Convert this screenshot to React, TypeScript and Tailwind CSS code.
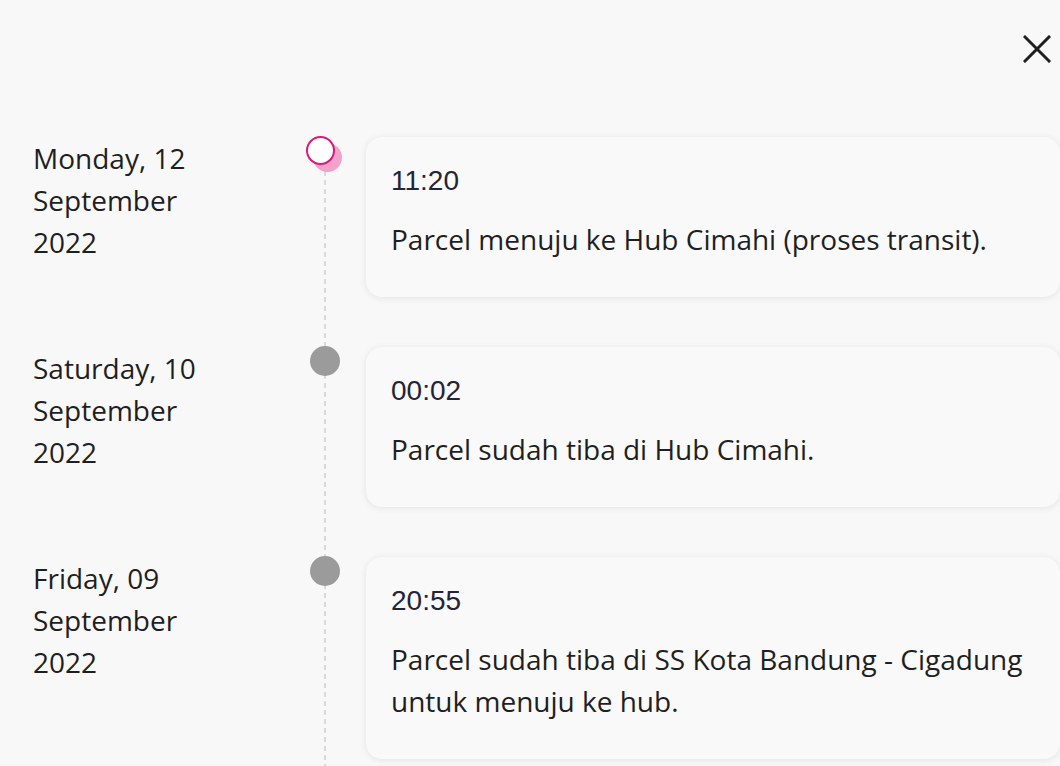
type TrackingEvent = {
  day: string;
  month: string;
  year: string;
  time: string;
  note: string;
};

const EVENTS: TrackingEvent[] = [
  {
    day: "Monday, 12",
    month: "September",
    year: "2022",
    time: "11:20",
    note: "Parcel menuju ke Hub Cimahi (proses transit).",
  },
  {
    day: "Saturday, 10",
    month: "September",
    year: "2022",
    time: "00:02",
    note: "Parcel sudah tiba di Hub Cimahi.",
  },
  {
    day: "Friday, 09",
    month: "September",
    year: "2022",
    time: "20:55",
    note: "Parcel sudah tiba di SS Kota Bandung - Cigadung untuk menuju ke hub.",
  },
];

function CloseIcon() {
  return (
    <svg width="28" height="28" viewBox="0 0 28 28" fill="none" stroke="currentColor" strokeWidth="3" strokeLinecap="square">
      <path d="M2 2L26 26M26 2L2 26" />
    </svg>
  );
}

// latest event gets the hollow pink marker, older ones a plain grey dot
function Marker({ latest }: { latest: boolean }) {
  if (latest) {
    return (
      <span className="relative z-10 mt-[-1px] ml-[-9px] block h-[29px] w-[29px] rounded-full border-2 border-[#d81b78] bg-white shadow-[7px_7px_0_#f3a3c9]" />
    );
  }
  return <span className="relative z-10 mt-[-1px] block h-[30px] w-[30px] rounded-full bg-[#9b9b9b]" />;
}

function EventRow({ event, latest }: { event: TrackingEvent; latest: boolean }) {
  return (
    <li className="flex">
      <div className="w-[277px] shrink-0 text-[28px] leading-[42px] text-[#1f1f1f]">
        <div>{event.day}</div>
        <div>{event.month}</div>
        <div>{event.year}</div>
      </div>

      <div className="relative flex w-[30px] shrink-0 justify-center">
        <span
          className={`absolute bottom-0 left-[14px] w-[2px] bg-[repeating-linear-gradient(to_bottom,#d9d9d9_0_5px,transparent_5px_9px)] ${
            latest ? "top-[34px]" : "top-0"
          }`}
        />
        <Marker latest={latest} />
      </div>

      <div className="mb-[50px] ml-[26px] flex-1 rounded-[16px] bg-[#f9f9f9] px-[25px] pt-[23px] pb-[37px] shadow-[0_1px_7px_rgba(0,0,0,0.09)]">
        <div className="font-['Liberation_Sans',Arial,sans-serif] text-[28px] leading-[42px] text-[#242436]">
          {event.time}
        </div>
        <p className="mt-[16px] text-[28px] leading-[42px] text-[#1f1f1f]">{event.note}</p>
      </div>
    </li>
  );
}

export default function App() {
  return (
    <div className="min-h-[766px] w-[1060px] overflow-hidden bg-[#f8f8f8] pt-[35px] font-['Open_Sans','Noto_Sans',sans-serif]">
      <div className="flex justify-end pr-[9px]">
        <button type="button" aria-label="Close" className="block text-[#1f1f1f]">
          <CloseIcon />
        </button>
      </div>

      <ol className="mt-[74px] pl-[33px]">
        {EVENTS.map((event, i) => (
          <EventRow key={event.time} event={event} latest={i === 0} />
        ))}
      </ol>
    </div>
  );
}
